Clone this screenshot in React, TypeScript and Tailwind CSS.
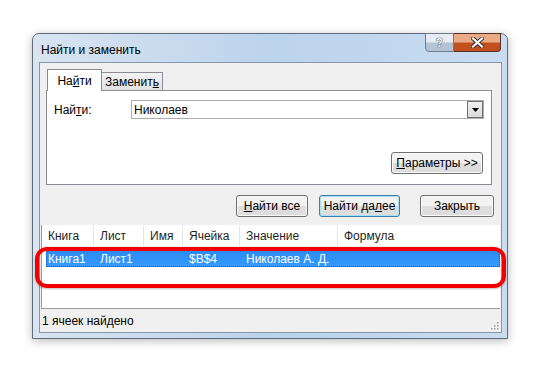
import React from "react";

const cols = [
  { title: "Книга", w: "w-[52px]", value: "Книга1" },
  { title: "Лист", w: "w-[50px]", value: "Лист1" },
  { title: "Имя", w: "w-[39px]", value: "" },
  { title: "Ячейка", w: "w-[57px]", value: "$B$4" },
  { title: "Значение", w: "w-[98px]", value: "Николаев А. Д." },
  { title: "Формула", w: "flex-1", value: "" },
];

function Button({
  children,
  className = "",
  primary = false,
}: {
  children: React.ReactNode;
  className?: string;
  primary?: boolean;
}) {
  return (
    <div
      className={`flex h-[22px] items-center justify-center rounded-[3px] border bg-gradient-to-b from-[#f2f2f2] from-50% to-[#dddddd] to-50% text-[12px] text-black ${
        primary ? "border-[#3c7fb1] shadow-[inset_0_0_0_1px_#a8e0f5]" : "border-[#707070] shadow-[inset_0_0_0_1px_#fcfcfc]"
      } ${className}`}
    >
      {children}
    </div>
  );
}

export default function App() {
  return (
    <div className="relative h-[369px] w-[540px] overflow-hidden bg-white font-['Liberation_Sans',Arial,sans-serif] text-[12px] text-black">
      {/* Window */}
      <div className="ml-[32px] mt-[33px] flex h-[306px] w-[476px] flex-col rounded-t-[7px] border border-[#5d6b7a] bg-gradient-to-r from-[#d9e4f0] via-[#bcd3ec] to-[#c9dcf0] shadow-[0_2px_10px_rgba(0,0,0,0.28)]">
        {/* Title bar */}
        <div className="flex h-[28px] items-start justify-between">
          <div className="pl-[8px] pt-[7px] text-[12px] text-black">Найти и заменить</div>
          <div className="mr-[6px] -mt-[1px] flex">
            <div className="flex h-[19px] w-[29px] items-center justify-center rounded-bl-[4px] border border-[#707c8a] bg-gradient-to-b from-[#e6ecf3] from-45% to-[#b3c3d6] to-55% text-[12px] font-bold text-white [text-shadow:0_0_1px_#333,0_0_1px_#333]">
              ?
            </div>
            <div className="flex h-[19px] w-[47px] items-center justify-center rounded-br-[4px] border border-l-0 border-[#5a3024] bg-gradient-to-b from-[#e8ab86] from-45% to-[#c2501e] to-55%">
              <svg width="13" height="11" viewBox="0 0 13 11">
                <path d="M2 1.5 L11 9.5 M11 1.5 L2 9.5" stroke="#3b2a25" strokeWidth="4" strokeLinecap="square" />
                <path d="M2 1.5 L11 9.5 M11 1.5 L2 9.5" stroke="#ffffff" strokeWidth="2.2" strokeLinecap="square" />
              </svg>
            </div>
          </div>
        </div>

        {/* Client area */}
        <div className="mx-[6px] mb-[5px] flex flex-1 flex-col border border-[#8796a8] bg-[#f0f0f0] mr-[5px]">
          {/* Tabs */}
          <div className="relative z-10 flex h-[22px] items-start pl-[7px] pt-0 mt-[6px]">
            <div className="flex h-[22px] w-[55px] items-center justify-center border-x border-t border-[#898c95] bg-white pt-[1px] text-[12px]">
              На<span className="underline">й</span>ти
            </div>
            <div className="mt-[3px] flex h-[18px] w-[61px] items-center justify-center border-r border-t border-[#898c95] bg-gradient-to-b from-[#f3f3f3] to-[#e1e1e1] text-[12px]">
              Замени<span className="">т</span>
              <span className="underline">ь</span>
            </div>
          </div>

          {/* Tab panel */}
          <div className="-mt-[1px] ml-[6px] flex h-[95px] w-[446px] flex-col border border-[#898c95] bg-white">
            <div className="flex items-center pl-[7px] pr-[7px] pt-[9px]">
              <div className="w-[77px]">
                Най<span className="underline">т</span>и:
              </div>
              <div className="flex h-[19px] flex-1 items-center justify-between border border-[#abadb3] bg-white pl-[2px]">
                <span>Николаев</span>
                <div className="flex h-[17px] w-[16px] items-center justify-center border border-[#707070] bg-gradient-to-b from-[#f2f2f2] to-[#d9d9d9]">
                  <svg width="7" height="4" viewBox="0 0 7 4">
                    <path d="M0 0 H7 L3.5 4 Z" fill="#000" />
                  </svg>
                </div>
              </div>
            </div>
            <div className="mr-[8px] mt-[33px] flex justify-end">
              <Button className="h-[21px] w-[92px]">
                <span className="underline">П</span>араметры &gt;&gt;
              </Button>
            </div>
          </div>

          {/* Buttons */}
          <div className="mt-[10px] flex justify-end pr-[7px]">
            <Button className="w-[72px]">
              <span className="underline">Н</span>айти все
            </Button>
            <Button primary className="ml-[11px] w-[81px]">
              Найти да<span className="underline">л</span>ее
            </Button>
            <Button className="ml-[20px] w-[74px]">Закрыть</Button>
          </div>

          {/* Results list */}
          <div className="mx-[1px] mt-[8px] flex h-[84px] flex-col border-b border-l border-[#9a9a9a] bg-white">
            <div className="flex h-[22px] border-b border-[#f0f0f0]">
              {cols.map((c, i) => (
                <div
                  key={i}
                  className={`${c.w} flex items-center border-r border-[#e5e5e5] pl-[6px] text-[12px] text-[#1e1e1e] last:border-r-0`}
                >
                  {c.title}
                </div>
              ))}
            </div>
            <div className="ml-[4px] mt-[3px] flex h-[17px] border border-dotted border-[#1a5fb0] bg-gradient-to-b from-[#2d8bef] to-[#3399ff] text-white">
              {cols.map((c, i) => (
                <div
                  key={i}
                  className={`${i === 0 ? "w-[47px] pl-[1px]" : c.w + " pl-[6px]"} flex items-center whitespace-nowrap text-[12px]`}
                >
                  {c.value}
                </div>
              ))}
            </div>
          </div>

          {/* Status bar */}
          <div className="flex flex-1 items-center justify-between pl-[2px] pr-[2px]">
            <span className="text-[12px]">1 ячеек найдено</span>
            <svg width="10" height="10" viewBox="0 0 10 10" className="self-end mb-[2px]">
              {[
                [8, 2],
                [5, 5],
                [8, 5],
                [2, 8],
                [5, 8],
                [8, 8],
              ].map(([x, y], i) => (
                <rect key={i} x={x} y={y} width="1.5" height="1.5" fill="#a0a0a0" />
              ))}
            </svg>
          </div>
        </div>
      </div>

      {/* Red highlight overlay */}
      <div className="absolute left-[35px] top-[247px] h-[41px] w-[471px] rounded-[12px] border-[4px] border-[#f20000] shadow-[0_1px_2px_rgba(0,0,0,0.25)]" />
    </div>
  );
}
